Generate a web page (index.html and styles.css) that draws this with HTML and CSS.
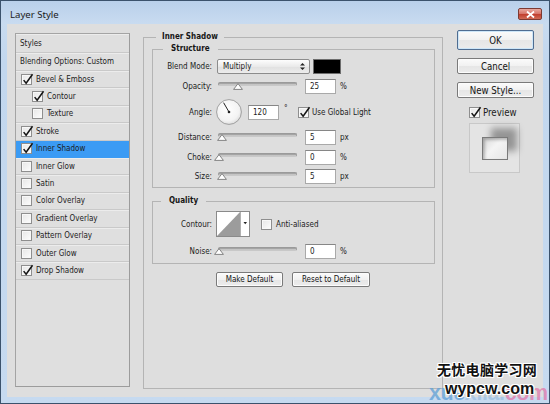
FILE: index.html
```html
<!DOCTYPE html>
<html>
<head>
<meta charset="utf-8">
<link rel="stylesheet" href="styles.css">
</head>
<body>
<div class="window">
  <div class="titlebar">
    <span class="title">Layer Style</span>
    <span class="close"><svg width="9" height="7" viewBox="0 0 9 7"><path d="M1 0.5 L8 6.5 M8 0.5 L1 6.5" stroke="#fff" stroke-width="1.8"/></svg></span>
  </div>
  <div class="client">
    <div class="styles-list">
      <div class="row head">Styles</div>
      <div class="row blend">Blending Options: Custom</div>
      <div class="row item"><span class="cb"><svg class="ck" viewBox="0 0 12 12"><path d="M1.8 5.6 L4.5 9 L11.5 -0.8"/></svg></span>Bevel &amp; Emboss</div>
      <div class="row item sub"><span class="cb"><svg class="ck" viewBox="0 0 12 12"><path d="M1.8 5.6 L4.5 9 L11.5 -0.8"/></svg></span>Contour</div>
      <div class="row item sub"><span class="cb"></span>Texture</div>
      <div class="row item"><span class="cb"><svg class="ck" viewBox="0 0 12 12"><path d="M1.8 5.6 L4.5 9 L11.5 -0.8"/></svg></span>Stroke</div>
      <div class="row item selected"><span class="cb"><svg class="ck" viewBox="0 0 12 12"><path d="M1.8 5.6 L4.5 9 L11.5 -0.8"/></svg></span>Inner Shadow</div>
      <div class="row item"><span class="cb"></span>Inner Glow</div>
      <div class="row item"><span class="cb"></span>Satin</div>
      <div class="row item"><span class="cb"></span>Color Overlay</div>
      <div class="row item"><span class="cb"></span>Gradient Overlay</div>
      <div class="row item"><span class="cb"></span>Pattern Overlay</div>
      <div class="row item"><span class="cb"></span>Outer Glow</div>
      <div class="row item"><span class="cb"><svg class="ck" viewBox="0 0 12 12"><path d="M1.8 5.6 L4.5 9 L11.5 -0.8"/></svg></span>Drop Shadow</div>
    </div>

    <fieldset class="group outer">
      <legend class="lg-outer">Inner Shadow</legend>
      <fieldset class="group structure">
        <legend class="lg-structure">Structure</legend>
        <div class="frow r-blend">
          <span class="lbl">Blend Mode:</span>
          <div class="select"><span>Multiply</span><svg width="5" height="7" viewBox="0 0 5 7"><path d="M2.5 0 L5 2.6 L0 2.6 Z M2.5 7 L5 4.4 L0 4.4 Z" fill="#222"/></svg></div>
          <div class="swatch"></div>
        </div>
        <div class="frow r-opacity">
          <span class="lbl">Opacity:</span>
          <div class="slider"><div class="track"></div><svg class="thumb" style="left:25%" width="10" height="7" viewBox="0 0 10 7"><path d="M5 0.6 L9.4 6.4 L0.6 6.4 Z" fill="#fff" stroke="#777" stroke-width="0.9"/></svg></div>
          <div class="num">25</div><span class="unit">%</span>
        </div>
        <div class="frow r-angle">
          <span class="lbl">Angle:</span>
          <svg class="dial" width="26" height="26" viewBox="0 0 26 26"><defs><radialGradient id="dg" cx="45%" cy="40%" r="65%"><stop offset="0" stop-color="#ffffff"/><stop offset="0.7" stop-color="#f3f3f3"/><stop offset="1" stop-color="#d8d8d8"/></radialGradient></defs><circle cx="13" cy="13" r="12.4" fill="url(#dg)" stroke="#8d8d8d" stroke-width="0.8"/><line x1="13" y1="13" x2="7.6" y2="3.7" stroke="#222" stroke-width="1"/><circle cx="13" cy="13" r="1.3" fill="#222"/></svg>
          <div class="num angle-num">120</div><span class="deg">°</span>
          <span class="cb gl"><svg class="ck" viewBox="0 0 12 12"><path d="M1.8 5.6 L4.5 9 L11.5 -0.8"/></svg></span><span class="cblabel">Use Global Light</span>
        </div>
        <div class="frow r-distance">
          <span class="lbl">Distance:</span>
          <div class="slider"><div class="track"></div><svg class="thumb" style="left:5%" width="10" height="7" viewBox="0 0 10 7"><path d="M5 0.6 L9.4 6.4 L0.6 6.4 Z" fill="#fff" stroke="#777" stroke-width="0.9"/></svg></div>
          <div class="num">5</div><span class="unit">px</span>
        </div>
        <div class="frow r-choke">
          <span class="lbl">Choke:</span>
          <div class="slider"><div class="track"></div><svg class="thumb" style="left:1%" width="10" height="7" viewBox="0 0 10 7"><path d="M5 0.6 L9.4 6.4 L0.6 6.4 Z" fill="#fff" stroke="#777" stroke-width="0.9"/></svg></div>
          <div class="num">0</div><span class="unit">%</span>
        </div>
        <div class="frow r-size">
          <span class="lbl">Size:</span>
          <div class="slider"><div class="track"></div><svg class="thumb" style="left:5%" width="10" height="7" viewBox="0 0 10 7"><path d="M5 0.6 L9.4 6.4 L0.6 6.4 Z" fill="#fff" stroke="#777" stroke-width="0.9"/></svg></div>
          <div class="num">5</div><span class="unit">px</span>
        </div>
      </fieldset>

      <fieldset class="group quality">
        <legend class="lg-quality">Quality</legend>
        <div class="frow r-contour">
          <span class="lbl">Contour:</span>
          <svg class="contour" width="34" height="26" viewBox="0 0 34 26"><rect x="0.5" y="0.5" width="33" height="25" fill="#fff" stroke="#8a8a8a"/><path d="M1 25 L24 1 L24 25 Z" fill="#9c9c9c"/><line x1="24.5" y1="1" x2="24.5" y2="25" stroke="#b0b0b0"/><path d="M27.5 11 L31 11 L29.25 13.2 Z" fill="#222"/></svg>
          <span class="cb aa"></span><span class="cblabel">Anti-aliased</span>
        </div>
        <div class="frow r-noise">
          <span class="lbl">Noise:</span>
          <div class="slider"><div class="track"></div><svg class="thumb" style="left:1%" width="10" height="7" viewBox="0 0 10 7"><path d="M5 0.6 L9.4 6.4 L0.6 6.4 Z" fill="#fff" stroke="#777" stroke-width="0.9"/></svg></div>
          <div class="num">0</div><span class="unit">%</span>
        </div>
      </fieldset>

      <div class="defaults">
        <button class="btn b-make">Make Default</button>
        <button class="btn b-reset">Reset to Default</button>
      </div>
    </fieldset>

    <div class="side">
      <button class="btn sbtn ok">OK</button>
      <button class="btn sbtn">Cancel</button>
      <button class="btn sbtn">New Style...</button>
      <div class="preview-row"><span class="cb"><svg class="ck" viewBox="0 0 12 12"><path d="M1.8 5.6 L4.5 9 L11.5 -0.8"/></svg></span><span class="plabel">Preview</span></div>
      <div class="preview-box"><div class="preview-sq"></div></div>
    </div>
  </div>
  <div class="bottomframe"></div>
</div>
<div class="watermark">
  <span class="wm-bg"><span class="wm-blue">xue</span>xila.<span class="wm-pink">com</span></span>
  <span class="wm-cn">无忧电脑学习网</span>
  <span class="wm-en">wypcw.com</span>
</div>
</body>
</html>
```
FILE: styles.css
```css
* { box-sizing: border-box; }
html, body { margin: 0; padding: 0; }
body {
  width: 550px;
  height: 404px;
  overflow: hidden;
  position: relative;
  background: #c3d7ee;
  font-family: "DejaVu Sans Condensed", "DejaVu Sans", "Liberation Sans", sans-serif;
  font-stretch: condensed;
  font-size: 8px;
  color: #1c1c1c;
}
.window {
  width: 550px;
  height: 404px;
  border: 1px solid #3b526c;
  background: linear-gradient(#b9d0ea 0px, #c8dbf0 22px, #c2d7ee 60px, #c6daf0 100%);
  display: flex;
  flex-direction: column;
}
.titlebar {
  height: 23px;
  flex: none;
  display: flex;
  align-items: flex-start;
}
.title {
  font-family: "Noto Sans", "Open Sans", sans-serif;
  font-stretch: normal;
  font-size: 9.6px;
  line-height: 12px;
  margin: 8px 0 0 9px;
  color: #1a1a1a;
}
.close {
  margin: 7px 7px 0 auto;
  width: 24px;
  height: 12px;
  border: 1px solid #7d3a32;
  border-radius: 2px;
  background: linear-gradient(#e9a99f 0%, #d7776b 45%, #c2402f 55%, #cf6a55 100%);
  display: flex;
  align-items: center;
  justify-content: center;
}
.client {
  margin: 0 6px;
  height: 373px;
  flex: none;
  background: #dedede;
  display: flex;
  align-items: flex-start;
}
.bottomframe { flex: 1; }

/* Styles list */
.styles-list {
  margin: 9px 0 0 8px;
  width: 115px;
  height: 354px;
  flex: none;
  border: 1px solid #a4a4a4;
  border-right: 1px solid #9c9c9c;
  border-bottom: 1px solid #9c9c9c;
  background: #dfdfdf;
  display: flex;
  flex-direction: column;
}
.row {
  flex: none;
  display: flex;
  align-items: center;
  border-bottom: 1px solid #c9c9c9;
  box-shadow: inset 0 1px 0 #ececec;
  white-space: nowrap;
}
.row.head { height: 19px; padding-left: 4px; padding-top: 1px; }
.row.blend { height: 18px; padding-left: 4px; }
.row.item { height: 17.4px; padding-left: 5px; }
.row.item.sub { padding-left: 16px; }
.row.selected { background: #3b9bf4; border-bottom-color: #3b9bf4; box-shadow: none; }
.row .cb { margin-right: 4px; }

.cb {
  width: 11px;
  height: 11px;
  flex: none;
  position: relative;
  border: 1px solid #8e8e8e;
  background: linear-gradient(135deg, #e6e6e6, #fdfdfd);
  box-shadow: inset 0 0 0 1px #f8f8f8;
}
.ck {
  position: absolute;
  left: 0;
  top: 0;
  width: 11px;
  height: 11px;
  overflow: visible;
}
.ck path { fill: none; stroke: #151515; stroke-width: 1.7; stroke-linejoin: miter; }

/* Fieldsets */
fieldset.group {
  margin: 0;
  padding: 0;
  min-width: 0;
  border: 1px solid #b4b4b4;
}
fieldset.group > legend {
  font-weight: bold;
  line-height: 12px;
  padding: 0 6px;
  color: #161616;
}
.outer {
  margin: 7px 0 0 13px !important;
  width: 300px;
  height: 358px;
  flex: none;
  padding: 0 7px 0 8px !important;
}
.lg-outer { margin-left: 4px; }
.structure {
  width: 283px;
  padding: 4px 0 3px 0 !important;
}
.lg-structure { margin-left: 10px; padding: 0 8px !important; }
.quality {
  width: 283px;
  margin-top: 7px !important;
  padding: 4px 0 4px 0 !important;
}
.lg-quality { margin-left: 8px; padding: 0 8px !important; }

.frow {
  display: flex;
  align-items: center;
  height: 15px;
  margin-bottom: 5px;
  white-space: nowrap;
}
.r-angle { height: 26px; }
.r-choke { margin-bottom: 4px; }
.r-size { margin-bottom: 0; }
.r-contour { height: 26px; margin-bottom: 7px; }
.r-noise { margin-bottom: 0; }

.lbl {
  width: 59px;
  flex: none;
  text-align: right;
  margin-right: 5px;
}
.select {
  width: 93px;
  height: 15px;
  flex: none;
  border: 1px solid #8c8c8c;
  border-radius: 2px;
  background: linear-gradient(#fdfdfd, #eaeaea 50%, #e0e0e0 51%, #ececec);
  display: flex;
  align-items: center;
  justify-content: space-between;
  padding: 0 4px 0 5px;
}
.swatch {
  width: 28px;
  height: 15px;
  margin-left: 3px;
  flex: none;
  background: #000;
  border: 1px solid #6d6d6d;
}
.slider {
  position: relative;
  width: 79px;
  height: 15px;
  margin-left: 1px;
  flex: none;
  padding-top: 3px;
}
.track {
  height: 4px;
  border-radius: 2px;
  background: linear-gradient(#8f8f8f, #b9b9b9 50%, #d0d0d0);
  border: 1px solid #9a9a9a;
  border-bottom-color: #c8c8c8;
}
.thumb {
  position: absolute;
  top: 4px;
  margin-left: -5px;
}
.num {
  width: 31px;
  height: 15px;
  flex: none;
  margin-left: 8px;
  background: #fff;
  border: 1px solid #a9a9a9;
  border-top-color: #868686;
  padding-left: 4px;
  display: flex;
  align-items: center;
}
.unit { margin-left: 4px; }
.dial { margin-left: -1px; flex: none; }
.angle-num { margin-left: 6px; }
.deg { margin-left: 5px; width: 4px; align-self: flex-start; margin-top: 5px; }
.cb.gl { margin-left: 10px; }
.cblabel { margin-left: 3px; }
.contour { margin-left: -1px; flex: none; }
.cb.aa { margin-left: 11px; }
.r-contour .cblabel { margin-left: 4px; }

.defaults {
  display: flex;
  margin-top: 8px;
  padding-left: 64px;
}
.btn {
  font: inherit;
  color: #141414;
  height: 15px;
  padding: 0;
  border: 1px solid #7a7a7a;
  border-radius: 2px;
  background: linear-gradient(#fbfbfb 0%, #f1f1f1 50%, #e6e6e6 51%, #ececec 100%);
  box-shadow: inset 0 0 0 1px #fcfcfc;
  display: flex;
  align-items: center;
  justify-content: center;
}
.b-make { width: 67px; }
.b-reset { width: 78px; margin-left: 9px; }

/* Right side */
.side {
  margin: 6px 0 0 14px;
  width: 77px;
  flex: none;
  display: flex;
  flex-direction: column;
}
.sbtn {
  width: 77px;
  height: 16px;
  margin-top: 8px;
  font-family: "DejaVu Sans Condensed", "DejaVu Sans", sans-serif;
  font-size: 9.6px;
}
.sbtn.ok {
  margin-top: 0;
  height: 20px;
  border-color: #4f6d91;
  box-shadow: inset 0 0 0 1px #cde6f8;
}
.preview-row {
  display: flex;
  align-items: center;
  margin: 8px 0 0 12px;
  height: 12px;
}
.plabel { margin-left: 3px; font-size: 9.6px; }
.preview-box {
  width: 51px;
  height: 50px;
  margin: 5px 0 0 12px;
  background: #e4e4e4;
  border: 1px solid #c8c8c8;
  display: flex;
  align-items: center;
  justify-content: center;
}
.preview-sq {
  width: 26px;
  height: 23px;
  margin-top: 1px;
  border: 1px solid #7a7a7a;
  background: linear-gradient(135deg, #d9d9d9, #f4f4f4 45%, #e6e6e6);
  box-shadow: 9px -9px 7px rgba(0,0,0,0.35), inset 2px 2px 3px rgba(0,0,0,0.25);
}

/* Watermark overlay */
.watermark {
  position: absolute;
  left: 425px;
  top: 362px;
  width: 125px;
  height: 42px;
  pointer-events: none;
}
.wm-bg {
  position: absolute;
  left: 4px;
  top: 20px;
  font-family: "Liberation Sans", sans-serif;
  font-stretch: normal;
  font-weight: bold;
  font-size: 21.5px;
  letter-spacing: -0.4px;
  white-space: nowrap;
  color: rgba(140, 180, 215, 0.5);
  line-height: 22px;
}
.wm-blue { color: rgba(95, 160, 215, 0.75); }
.wm-pink { color: rgba(225, 120, 170, 0.75); }
.wm-cn {
  position: absolute;
  left: 12px;
  top: -1px;
  font-family: "Noto Sans CJK SC", sans-serif;
  font-stretch: normal;
  font-weight: bold;
  font-size: 14px;
  line-height: 16px;
  letter-spacing: 0.3px;
  white-space: nowrap;
  color: #111;
  text-shadow: 1px 0 0 #fff, -1px 0 0 #fff, 0 1px 0 #fff, 0 -1px 0 #fff, 1px 1px 0 #fff, -1px -1px 0 #fff, 1px -1px 0 #fff, -1px 1px 0 #fff;
}
.wm-en {
  position: absolute;
  left: 20px;
  top: 18px;
  font-family: "Liberation Sans", sans-serif;
  font-stretch: normal;
  font-weight: bold;
  font-size: 16px;
  line-height: 18px;
  white-space: nowrap;
  color: #111;
  text-shadow: 1px 0 0 #fff, -1px 0 0 #fff, 0 1px 0 #fff, 0 -1px 0 #fff, 1px 1px 0 #fff, -1px -1px 0 #fff, 1px -1px 0 #fff, -1px 1px 0 #fff;
}
```
